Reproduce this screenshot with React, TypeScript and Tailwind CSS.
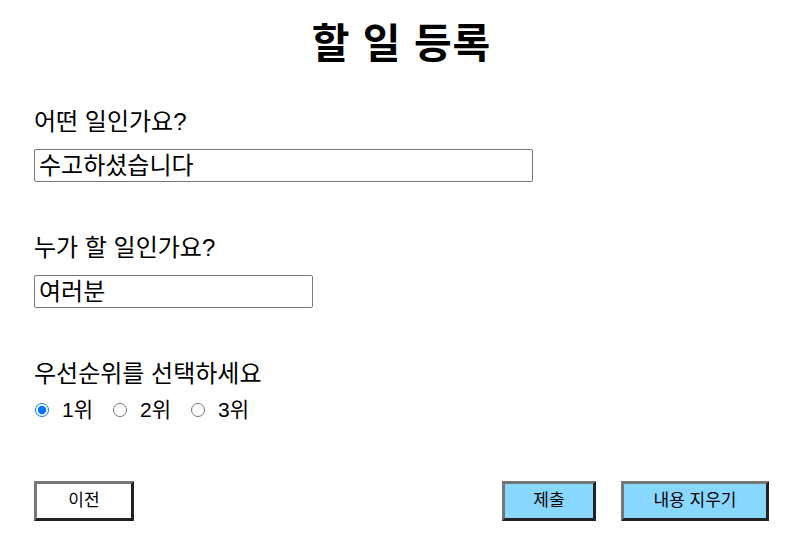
import { useState } from 'react';

const priorities = ['1위', '2위', '3위'];

export default function App() {
  const [title, setTitle] = useState('수고하셨습니다');
  const [owner, setOwner] = useState('여러분');
  const [priority, setPriority] = useState('1위');

  const clear = () => {
    setTitle('');
    setOwner('');
    setPriority('1위');
  };

  return (
    <div className="w-full min-h-screen bg-white text-black font-['Liberation_Sans','Noto_Sans_CJK_KR',sans-serif]">
      <div className="pl-[34px] pr-[26px] pt-[18px]">
        <h1 className="pl-[4px] pr-[4px] text-center text-[41px] font-bold leading-[52px] tracking-[1px]">할 일 등록</h1>

        <div className="mt-[37px] flex flex-col">
          <label className="text-[24px] leading-[30px]">어떤 일인가요?</label>
          <input
            value={title}
            onChange={(e) => setTitle(e.target.value)}
            className="mt-[12px] w-[499px] h-[33px] border border-[#767676] rounded-[2px] px-[4px] text-[24px] outline-none"
          />
        </div>

        <div className="mt-[51px] flex flex-col">
          <label className="text-[24px] leading-[30px]">누가 할 일인가요?</label>
          <input
            value={owner}
            onChange={(e) => setOwner(e.target.value)}
            className="mt-[12px] w-[279px] h-[33px] border border-[#767676] rounded-[2px] px-[4px] text-[24px] outline-none"
          />
        </div>

        <div className="mt-[51px] flex flex-col">
          <label className="text-[24px] leading-[30px]">우선순위를 선택하세요</label>
          <div className="mt-[7px] flex items-center">
            {priorities.map((p) => (
              <label key={p} className="flex items-center mr-[19px] text-[21px] leading-[28px]">
                <input
                  type="radio"
                  name="priority"
                  checked={priority === p}
                  onChange={() => setPriority(p)}
                  className="w-[14px] h-[14px] ml-[1px] mr-[13px] accent-[#0075ff]"
                />
                {p}
              </label>
            ))}
          </div>
        </div>

        <div className="mt-[57px] flex items-center">
          <button
            type="button"
            className="w-[100px] h-[40px] bg-white border-[3px] border-t-[#767676] border-l-[#767676] border-b-[#222] border-r-[#222] text-[17px]"
          >
            이전
          </button>
          <div className="flex-1" />
          <button
            type="submit"
            className="w-[94px] h-[40px] bg-[#87d7ff] border-[3px] border-t-[#767676] border-l-[#767676] border-b-[#222] border-r-[#222] text-[17px]"
          >
            제출
          </button>
          <button
            type="button"
            onClick={clear}
            className="ml-[25px] w-[148px] h-[40px] bg-[#87d7ff] border-[3px] border-t-[#767676] border-l-[#767676] border-b-[#222] border-r-[#222] text-[17px]"
          >
            내용 지우기
          </button>
        </div>
      </div>
    </div>
  );
}
